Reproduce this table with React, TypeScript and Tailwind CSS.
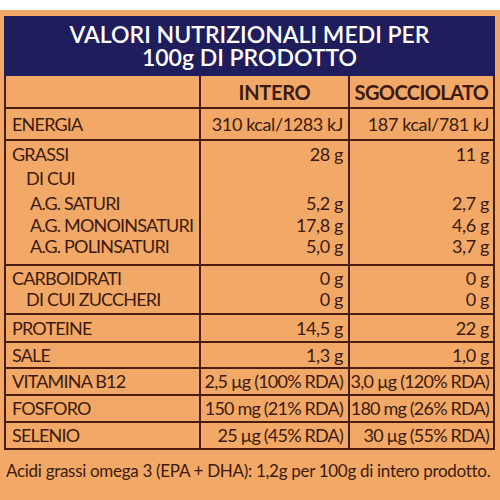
import React from "react";

type Line = { label: string; indent?: number; a?: string; b?: string; h: number };
type Row = { lines: Line[]; pt: number; pb: number; tight?: boolean };

const rows: Row[] = [
  { pt: 1, pb: 1, lines: [{ label: "ENERGIA", a: "310 kcal/1283 kJ", b: "187 kcal/781 kJ", h: 28 }] },
  {
    pt: 1,
    pb: 7,
    lines: [
      { label: "GRASSI", a: "28 g", b: "11 g", h: 24 },
      { label: "DI CUI", indent: 14, h: 25 },
      { label: "A.G. SATURI", indent: 18, a: "5,2 g", b: "2,7 g", h: 24 },
      { label: "A.G. MONOINSATURI", indent: 18, a: "17,8 g", b: "4,6 g", h: 21 },
      { label: "A.G. POLINSATURI", indent: 18, a: "5,0 g", b: "3,7 g", h: 21 },
    ],
  },
  {
    pt: 2,
    pb: 3,
    lines: [
      { label: "CARBOIDRATI", a: "0 g", b: "0 g", h: 21 },
      { label: "DI CUI ZUCCHERI", indent: 14, a: "0 g", b: "0 g", h: 21 },
    ],
  },
  { pt: 0, pb: 0, lines: [{ label: "PROTEINE", a: "14,5 g", b: "22 g", h: 26 }] },
  { pt: 0, pb: 0, lines: [{ label: "SALE", a: "1,3 g", b: "1,0 g", h: 24 }] },
  { pt: 0, pb: 0, tight: true, lines: [{ label: "VITAMINA B12", a: "2,5 µg (100% RDA)", b: "3,0 µg (120% RDA)", h: 25 }] },
  { pt: 0, pb: 0, tight: true, lines: [{ label: "FOSFORO", a: "150 mg (21% RDA)", b: "180 mg (26% RDA)", h: 25 }] },
  { pt: 0, pb: 0, tight: true, lines: [{ label: "SELENIO", a: "25 µg (45% RDA)", b: "30 µg (55% RDA)", h: 25 }] },
];

const font = { fontFamily: 'Lato, "Open Sans", sans-serif' };
const cell = "border-2 border-[#4a1c12] align-top";

export default function App() {
  return (
    <div className="w-[500px] h-[500px] bg-white overflow-hidden" style={font}>
      <div className="mt-[10px] h-[490px] bg-[#f2a866] pt-[6px] pl-[4px] pr-[5px] text-[#3d1a10]">
        {/* Title */}
        <div className="bg-[#1f1d5c] w-[491px] h-[60px] flex flex-col items-center justify-center text-white text-[23px] leading-[23px] font-semibold">
          <div>VALORI NUTRIZIONALI MEDI PER</div>
          <div>100g DI PRODOTTO</div>
        </div>

        {/* Table */}
        <table className="w-[489px] table-fixed border-collapse border-2 border-t-0 border-[#4a1c12] text-[18px]">
          <colgroup>
            <col className="w-[195px]" />
            <col className="w-[149px]" />
            <col className="w-[145px]" />
          </colgroup>
          <thead>
            <tr className="h-[32px]">
              <th className="border-2 border-t-0 border-[#4a1c12]" />
              <th className="border-2 border-t-0 border-[#4a1c12] font-bold text-[20px] text-center align-middle tracking-[-0.3px]">INTERO</th>
              <th className="border-2 border-t-0 border-[#4a1c12] font-bold text-[20px] text-center align-middle tracking-[-0.6px]">SGOCCIOLATO</th>
            </tr>
          </thead>
          <tbody>
            {rows.map((row, i) => (
              <tr key={i}>
                <td className={`${cell} px-[6px] tracking-[-0.8px]`} style={{ paddingTop: row.pt, paddingBottom: row.pb }}>
                  {row.lines.map((l, j) => (
                    <div key={j} className="flex items-center whitespace-nowrap" style={{ height: l.h, paddingLeft: l.indent ?? 0 }}>
                      {l.label}
                    </div>
                  ))}
                </td>
                <td
                  className={`${cell} pl-[2px] pr-[5px] ${row.tight ? "tracking-[-0.8px]" : "tracking-[-0.4px]"}`}
                  style={{ paddingTop: row.pt, paddingBottom: row.pb }}
                >
                  {row.lines.map((l, j) => (
                    <div key={j} className="flex items-center justify-end whitespace-nowrap" style={{ height: l.h }}>
                      {l.a ?? ""}
                    </div>
                  ))}
                </td>
                <td
                  className={`${cell} pl-[2px] pr-[4px] ${row.tight ? "tracking-[-0.8px]" : "tracking-[-0.4px]"}`}
                  style={{ paddingTop: row.pt, paddingBottom: row.pb }}
                >
                  {row.lines.map((l, j) => (
                    <div key={j} className="flex items-center justify-end whitespace-nowrap" style={{ height: l.h }}>
                      {l.b ?? ""}
                    </div>
                  ))}
                </td>
              </tr>
            ))}
          </tbody>
        </table>

        <p className="mt-[9px] pl-[2px] text-[17px] leading-[24px] tracking-[-0.3px] whitespace-nowrap">
          Acidi grassi omega 3 (EPA + DHA): 1,2g per 100g di intero prodotto.
        </p>
      </div>
    </div>
  );
}
